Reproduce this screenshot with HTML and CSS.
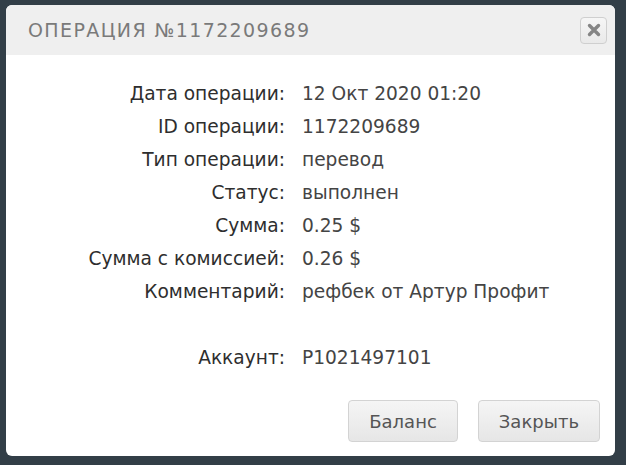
FILE: index.html
```html
<!DOCTYPE html>
<html lang="ru">
<head>
  <meta charset="UTF-8">
  <title>Операция</title>
  <link rel="stylesheet" href="styles.css">
</head>
<body>

  <div class="dialog">
    <div class="dialog-header">
      <h2>Операция №1172209689</h2>
      <button class="close-btn" title="Закрыть">
        <svg width="14" height="14" viewBox="0 0 14 14">
          <path d="M2.5 2.5 L11.5 11.5 M11.5 2.5 L2.5 11.5" stroke="#858585" stroke-width="3.4" stroke-linecap="round"/>
        </svg>
      </button>
    </div>

    <div class="dialog-body">
      <div class="info">
        <span class="label">Дата операции:</span><span class="value">12 Окт 2020 01:20</span>
        <span class="label">ID операции:</span><span class="value">1172209689</span>
        <span class="label">Тип операции:</span><span class="value">перевод</span>
        <span class="label">Статус:</span><span class="value">выполнен</span>
        <span class="label">Сумма:</span><span class="value">0.25 $</span>
        <span class="label">Сумма с комиссией:</span><span class="value">0.26 $</span>
        <span class="label">Комментарий:</span><span class="value">рефбек от Артур Профит</span>
        <span class="label spacer"></span><span class="value spacer"></span>
        <span class="label">Аккаунт:</span><span class="value">P1021497101</span>
      </div>
    </div>

    <div class="dialog-footer">
      <button class="btn">Баланс</button>
      <button class="btn">Закрыть</button>
    </div>
  </div>

</body>
</html>
```

FILE: styles.css
```css
body {
  margin: 0;
  background: #323e47;
  font-family: "DejaVu Sans", sans-serif;
}

.dialog {
  margin: 5px 11px 9px 6px;
  height: 451px;
  background: #fff;
  border-radius: 6px;
  display: flex;
  flex-direction: column;
  overflow: hidden;
}

.dialog-header {
  height: 50px;
  background: #efefef;
  display: flex;
  align-items: center;
  justify-content: space-between;
  padding: 0 8px 0 22px;
}

.dialog-header h2 {
  margin: 0;
  font-family: "DejaVu Sans", sans-serif;
  font-weight: normal;
  font-size: 19px;
  letter-spacing: 1.4px;
  text-transform: uppercase;
  color: #7a7a7a;
}

.close-btn {
  width: 27px;
  height: 27px;
  padding: 0;
  border: 1px solid #cfcfcf;
  border-radius: 4px;
  background: linear-gradient(#f6f6f6, #e9e9e9);
  display: flex;
  align-items: center;
  justify-content: center;
  cursor: pointer;
}

.dialog-body {
  flex: 1;
  padding-top: 22px;
}

.info {
  display: grid;
  grid-template-columns: 279px auto;
  column-gap: 17px;
  grid-auto-rows: 33px;
  align-items: center;
  font-size: 18.6px;
}

.label {
  text-align: right;
  color: #2e2e2e;
}

.value {
  color: #444;
}

.dialog-footer {
  display: flex;
  justify-content: flex-end;
  gap: 20px;
  padding: 0 15px 14px 0;
}

.btn {
  height: 42px;
  padding: 0 20px;
  border: 1px solid #d3d3d3;
  border-radius: 4px;
  background: linear-gradient(#f5f5f5, #e6e6e6);
  font-family: "DejaVu Sans", sans-serif;
  font-size: 18px;
  color: #555;
  cursor: pointer;
}

.btn:hover {
  background: #e6e6e6;
}
```
